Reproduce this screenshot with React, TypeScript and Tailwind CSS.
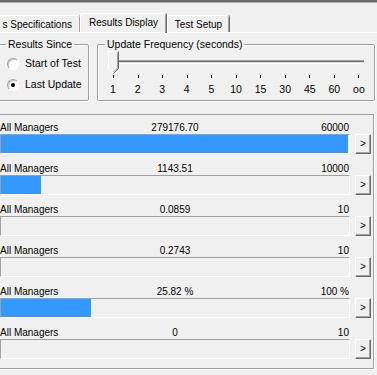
import React from "react"

const rows = [
    { value: "279176.70", max: "60000", pct: 1 },
    { value: "1143.51", max: "10000", pct: 1143.51 / 10000 },
    { value: "0.0859", max: "10", pct: 0 },
    { value: "0.2743", max: "10", pct: 0 },
    { value: "25.82 %", max: "100 %", pct: 0.2582 },
    { value: "0", max: "10", pct: 0 },
]

const ticks = ["1", "2", "3", "4", "5", "10", "15", "30", "45", "60", "oo"]

function Radio({ checked, label }: { checked?: boolean; label: string }) {
    return (
        <div className="flex items-center h-[13px]">
            <div className="ml-[8px] w-[12px] h-[12px] rounded-full border border-t-[#a0a0a0] border-l-[#a0a0a0] border-b-[#ffffff] border-r-[#ffffff] bg-[#fdfdfd] shadow-[inset_1px_1px_0_#c8c8c8] flex items-center justify-center">
                {checked && <div className="w-[4px] h-[4px] rounded-full bg-black" />}
            </div>
            <span className="ml-[6px] leading-[13px] text-[10.5px]">{label}</span>
        </div>
    )
}

function Tab({ label, selected, className }: { label: string; selected?: boolean; className?: string }) {
    return (
        <div
            className={`flex items-center justify-center rounded-t-[2px] border-t border-l border-t-white border-l-white shadow-[inset_-1px_0_0_#a0a0a0,1px_0_0_#696969] ${selected ? "h-[20px] relative z-10" : "h-[17px]"} ${className ?? ""}`}
        >
            <span className={selected ? "pb-[2px]" : ""}>{label}</span>
        </div>
    )
}

export default function App() {
    return (
        <div className="w-[377px] h-[375px] overflow-hidden bg-[#f0f0f0] text-black text-[10px] font-['Liberation_Sans',Arial,sans-serif]">
            {/* window edge */}
            <div className="h-[2px] bg-[#6b6b6b]" />
            <div className="h-px bg-[#b4b4b4]" />

            {/* tab strip */}
            <div className="flex items-end h-[29px]">
                <Tab label="s Specifications" className="-ml-[4px] w-[84px] justify-end pr-[8px]" />
                <Tab label="Results Display" selected className="w-[86px] -mb-px" />
                <Tab label="Test Setup" className="w-[62px] ml-px" />
            </div>
            <div className="h-px bg-white" />

            {/* group boxes */}
            <div className="flex mt-[5px]">
                <fieldset className="-ml-[2px] w-[91px] h-[63px] border border-[#a0a0a0] shadow-[1px_1px_0_#fff,inset_1px_1px_0_#fff] rounded-[2px]">
                    <legend className="ml-[7px] px-[2px] leading-[12px] text-[10.5px]">Results Since</legend>
                    <div className="flex flex-col gap-[8px] pt-[7px]">
                        <Radio label="Start of Test" />
                        <Radio label="Last Update" checked />
                    </div>
                </fieldset>

                <fieldset className="ml-[8px] w-[278px] h-[63px] border border-[#a0a0a0] shadow-[1px_1px_0_#fff,inset_1px_1px_0_#fff] rounded-[2px]">
                    <legend className="ml-[7px] px-[2px] leading-[12px] text-[10.5px]">Update Frequency (seconds)</legend>
                    <div className="relative ml-[10px] mt-px w-[256px] h-[23px]">
                        <div className="absolute left-[2px] right-0 top-[9px] h-[4px] border-t border-t-[#a0a0a0] border-b border-b-white bg-[#e3e3e3] shadow-[inset_0_1px_0_#696969]" />
                        <svg className="absolute left-0 top-0" width="11" height="23" viewBox="0 0 11 23">
                            <polygon points="0.5,0.5 10.5,0.5 10.5,17.5 5.5,22.5 0.5,17.5" fill="#f0f0f0" />
                            <polyline points="0.5,17.5 0.5,0.5 10.5,0.5" fill="none" stroke="#ffffff" />
                            <polyline points="10.5,0.5 10.5,17.5 5.5,22.5" fill="none" stroke="#696969" />
                            <polyline points="9.5,1.5 9.5,17 5.5,21" fill="none" stroke="#a0a0a0" />
                            <line x1="0.5" y1="17.5" x2="5" y2="22" stroke="#ffffff" />
                        </svg>
                    </div>
                    <div className="ml-[15px] mt-px w-[246px] h-[3px] flex justify-between">
                        {ticks.map((t) => (
                            <div key={t} className="w-px h-[3px] bg-black" />
                        ))}
                    </div>
                    <div className="ml-[5px] mt-[5px] w-[266px] flex justify-between leading-[12px] text-[10.5px]">
                        {ticks.map((t) => (
                            <div key={t} className="w-[20px] text-center">{t}</div>
                        ))}
                    </div>
                </fieldset>
            </div>

            {/* counters list */}
            <div className="mt-[13px] -ml-[2px] w-[376px] h-[255px] border border-[#a0a0a0] shadow-[1px_1px_0_#fff] pl-[1px] pt-[6px] flex flex-col gap-[8px]">
                {rows.map((r, i) => (
                    <div key={i} className="flex flex-col">
                        <div className="w-[350px] grid grid-cols-3 h-[13px] leading-[13px] whitespace-nowrap">
                            <span>All Managers</span>
                            <span className="text-center">{r.value}</span>
                            <span className="text-right pr-px">{r.max}</span>
                        </div>
                        <div className="flex h-[20px]">
                            <div className="w-[350px] h-[20px] border-t border-l border-t-[#a0a0a0] border-l-[#a0a0a0] border-b border-r border-b-white border-r-white">
                                <div className="h-[18px] bg-[#3399ff]" style={{ width: Math.round(r.pct * 347) }} />
                            </div>
                            <button className="ml-[5px] w-[16px] h-[20px] bg-[#f0f0f0] border border-t-white border-l-white border-b-[#696969] border-r-[#696969] shadow-[inset_-1px_-1px_0_#a0a0a0] flex items-center justify-center text-[10px] leading-none pb-px">
                                &gt;
                            </button>
                        </div>
                    </div>
                ))}
            </div>
        </div>
    )
}
